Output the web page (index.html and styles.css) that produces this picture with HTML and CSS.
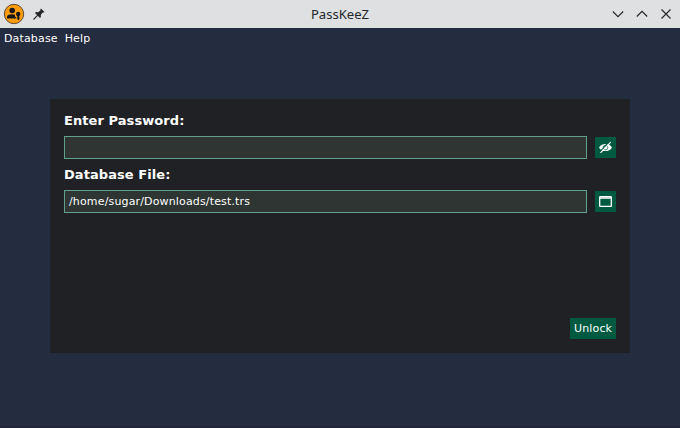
FILE: index.html
```
<!DOCTYPE html>
<html lang="en">
<head>
<meta charset="utf-8">
<title>PassKeeZ</title>
<link rel="stylesheet" href="styles.css">
</head>
<body>
<header class="titlebar">
  <div class="left">
    <svg class="app-icon" width="22" height="22" viewBox="0 0 22 22">
      <circle cx="11" cy="11" r="9.700" fill="#ff9c0c" stroke="#5b4a36" stroke-width="1"/>
      <circle cx="9.200" cy="7.500" r="2.800" fill="#171717"/>
      <path d="M4 15.500v-1.800c0-1.700 2.400-2.500 5-2.500 1.300 0 2.300.2 3 .5v1.800l1.300 1v1z" fill="#171717"/>
      <circle cx="15.200" cy="11" r="2.200" fill="#171717"/>
      <path d="M14.300 12.500h1.800v1l.7.8-.7.7.7.800-1.500 1.500-1-1z" fill="#171717"/>
    </svg>
    <svg class="pin" width="12" height="12" viewBox="0 0 12 12">
      <path d="M7.900.5 11.500 4l-.9.6-.8-.1-2 2.300.1 2.200-.9.9L2 5l.9-.9 2.300.1 2.300-2-.1-.8z" fill="#232629"/>
      <path d="M4.800 7.200.5 11.500" stroke="#232629" stroke-width="1.100"/>
    </svg>
  </div>
  <h1 class="title">PassKeeZ</h1>
  <div class="controls">
    <svg width="12" height="12" viewBox="0 0 12 12"><path d="M.8 3.500 6 8.700l5.200-5.200"/></svg>
    <svg width="12" height="12" viewBox="0 0 12 12"><path d="M.8 8.500 6 3.300l5.200 5.200"/></svg>
    <svg width="12" height="12" viewBox="0 0 12 12"><path d="m1.500 1.500 9 9m0-9-9 9"/></svg>
  </div>
</header>
<nav class="menu"><span>Database</span><span>Help</span></nav>
<main class="card">
  <label class="label">Enter Password:</label>
  <div class="row">
    <div class="field"></div>
    <div class="icon-button">
      <svg width="15" height="15" viewBox="0 0 15 15">
        <path d="M1 7.500C2.500 4.800 4.800 3.900 7.500 3.900S12.500 4.800 14 7.500c-1.500 2.700-3.800 3.600-6.500 3.600S2.500 10.200 1 7.500z" fill="#fff"/>
        <circle cx="7.500" cy="7.500" r="2.300" fill="none" stroke="#005a41" stroke-width=".7"/>
        <path d="M1.700 11.800 11.700 1.400" stroke="#005a41" stroke-width="1.200"/>
        <path d="M2.500 12.800 12.700 2.200" stroke="#fff" stroke-width="1.200"/>
      </svg>
    </div>
  </div>
  <label class="label second">Database File:</label>
  <div class="row">
    <div class="field">/home/sugar/Downloads/test.trs</div>
    <div class="icon-button">
      <svg width="15" height="15" viewBox="0 0 15 15">
        <rect x="1.700" y="2.700" width="11.600" height="9.700" rx=".5" fill="none" stroke="#fff" stroke-width="1.300"/>
        <path d="M1.500 4h12" stroke="#fff" stroke-width="2" opacity=".75"/>
      </svg>
    </div>
  </div>
  <div class="unlock">Unlock</div>
</main>
</body>
</html>
```
FILE: styles.css
```
* { box-sizing: border-box; }
body {
  margin: 0;
  height: 428px;
  overflow: hidden;
  background: #242c3f;
  border-bottom: 2px solid #20263a;
  color: #fff;
  font: 11px/14px "DejaVu Sans", sans-serif;
  letter-spacing: 0.150px;
}
.titlebar {
  height: 28px;
  padding: 0 8px 0 3px;
  display: grid;
  grid-template-columns: 1fr auto 1fr;
  align-items: center;
  background: #dee0e2;
  color: #232629;
}
.left { display: flex; align-items: center; gap: 8px; }
.title {
  margin: 0 0 0 5px;
  font: 13.100px/18px "Noto Sans", sans-serif;
  letter-spacing: 0;
}
.controls { display: flex; justify-content: flex-end; gap: 12px; }
.controls path { fill: none; stroke: #232629; stroke-width: 1.100; }
.menu { display: flex; gap: 7px; padding: 4px 4px 3px; height: 71px; }
.card {
  width: 580px;
  height: 254px;
  margin: 0 auto;
  padding: 14px;
  display: flex;
  flex-direction: column;
  background: #202124;
}
.label { font-size: 13px; font-weight: bold; line-height: 16px; letter-spacing: 0.070px; }
.second { margin-top: 8px; }
.row { display: flex; align-items: center; gap: 8px; margin-top: 7px; }
.field {
  flex: 1;
  height: 23px;
  padding: 0 4px;
  border: 1px solid #5f9f8b;
  background: #2e3532;
  line-height: 21px;
}
.icon-button {
  width: 21px;
  height: 21px;
  display: grid;
  place-items: center;
  background: #005a41;
}
.unlock {
  align-self: flex-end;
  margin-top: auto;
  width: 46px;
  height: 21px;
  padding: 0 4px;
  line-height: 21px;
  background: #005a41;
}
```
